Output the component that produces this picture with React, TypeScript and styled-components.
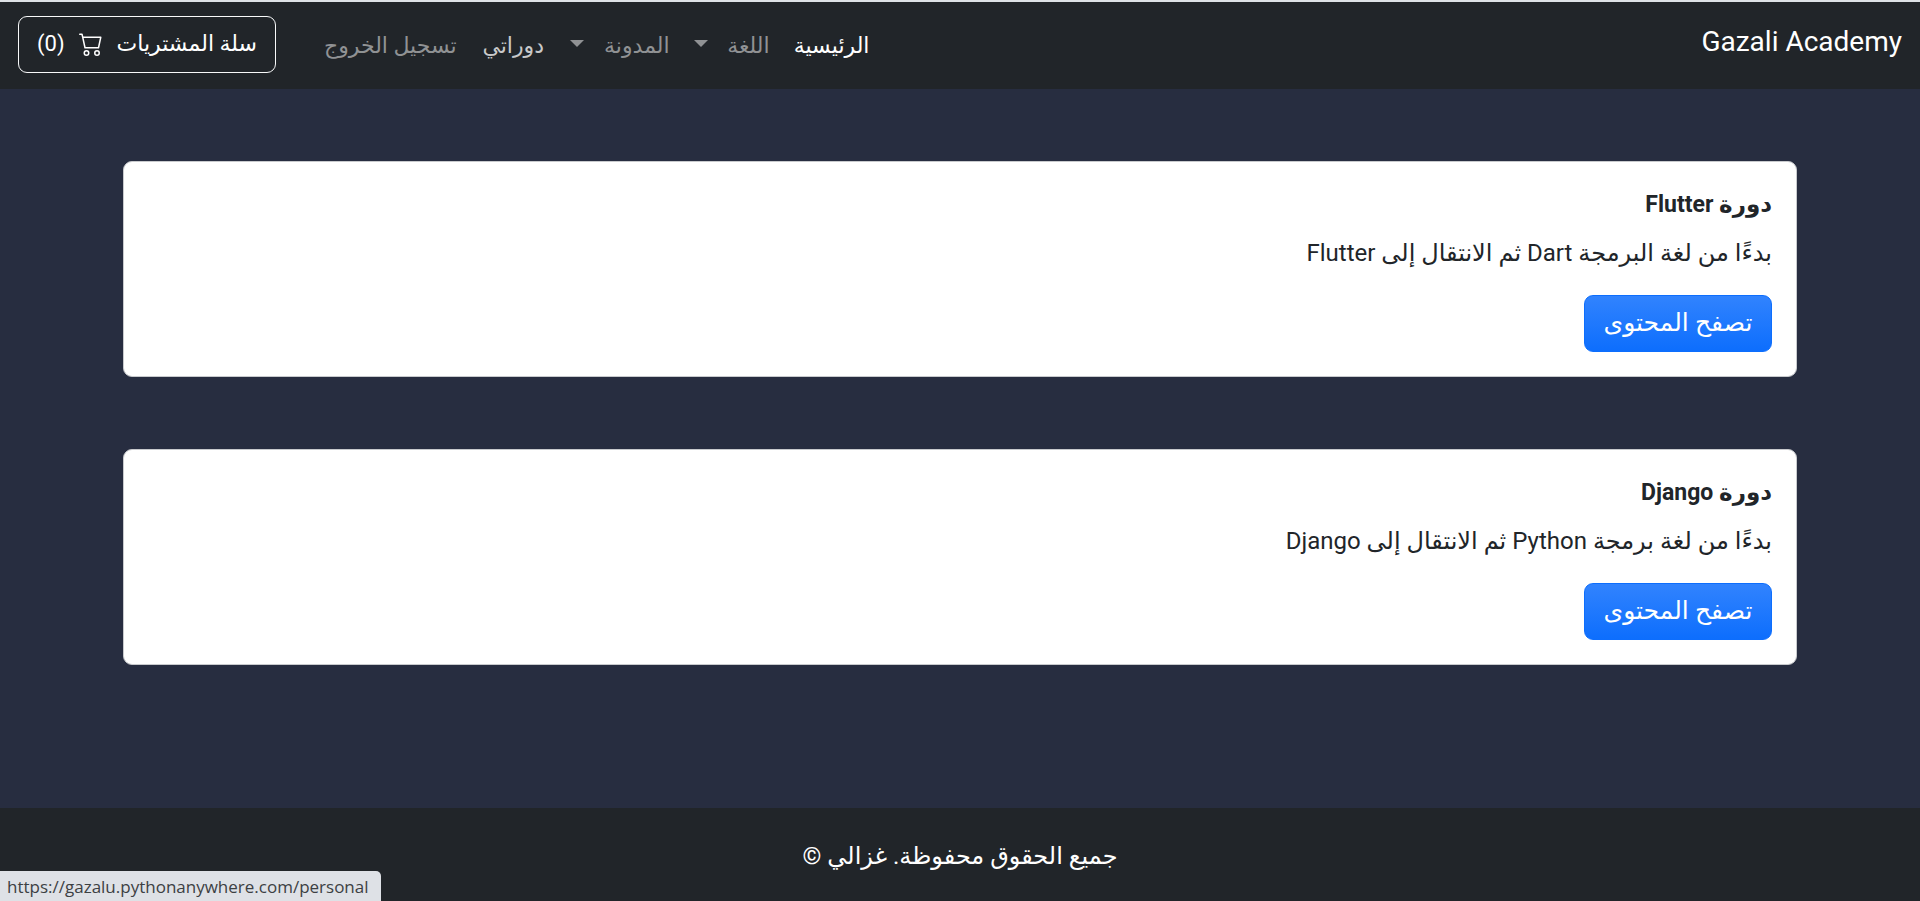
import React from "react";
import styled, { createGlobalStyle } from "styled-components";

const GlobalStyle = createGlobalStyle`
  *, *::before, *::after { box-sizing: border-box; }
  body {
    margin: 0;
    background: #272d40;
    color: #212529;
    font-family: Roboto, "DejaVu Sans", sans-serif;
    font-size: 24px;
    line-height: 36px;
  }
`;

const Page = styled.div`
  display: flex;
  flex-direction: column;
  min-height: 100vh;
`;

const Navbar = styled.header`
  display: flex;
  align-items: center;
  padding: 14px 18px 16px;
  background: #212529;
  border-top: 2px solid #dee2e6;
`;

const Brand = styled.a`
  margin-inline-end: auto;
  padding-bottom: 6px;
  color: #fff;
  font-size: 28px;
  text-decoration: none;
  white-space: nowrap;
`;

const NavList = styled.ul`
  display: flex;
  margin: 0;
  padding: 0;
  list-style: none;
`;

const NavLink = styled.a<{ $tone?: "active" | "hover"; $width: number; $menu?: boolean }>`
  display: flex;
  align-items: center;
  justify-content: ${(p) => (p.$menu ? "space-between" : "center")};
  min-width: ${(p) => p.$width}px;
  padding: 3px 12px 0;
  font-size: 22px;
  white-space: nowrap;
  color: ${(p) => (p.$tone === "active" ? "#fff" : p.$tone === "hover" ? "#c8c9ca" : "#909294")};
  text-decoration: none;
`;

const Caret = styled.span`
  margin-bottom: 6px;
  border: 7px solid transparent;
  border-top-color: currentColor;
  border-bottom: 0;
`;

const CartButton = styled.button`
  display: flex;
  align-items: center;
  justify-content: space-between;
  gap: 12px;
  min-width: 258px;
  height: 57px;
  margin-inline-start: 36px;
  padding: 0 18px 2px;
  border: 1px solid #f8f9fa;
  border-radius: 9px;
  background: transparent;
  color: #fff;
  font: inherit;
  font-size: 22px;
  white-space: nowrap;
  cursor: pointer;
`;

const Main = styled.main`
  flex: 1;
  display: flex;
  flex-direction: column;
  gap: 72px;
  padding: 72px 123px;
`;

const Card = styled.article`
  display: flex;
  flex-direction: column;
  align-items: flex-start;
  padding: 25px 24px 24px;
  border: 1px solid #c8cacd;
  border-radius: 9px;
  background: #fff;
`;

const CardTitle = styled.h2`
  margin: 0 0 12px;
  font-size: 23px;
  line-height: 36px;
  font-weight: 700;
`;

const CardText = styled.p`
  margin: 0 0 24px;
`;

const BrowseButton = styled.button`
  min-width: 188px;
  height: 57px;
  padding: 0 18px 2px;
  border: 1px solid #0d6efd;
  border-radius: 9px;
  background: linear-gradient(#3183fe, #0d6efd);
  color: #fff;
  font: inherit;
  font-size: 25px;
  white-space: nowrap;
  cursor: pointer;
`;

const Footer = styled.footer`
  padding: 30px 18px 27px;
  background: #212529;
  color: #fff;
  text-align: center;
`;

const StatusBar = styled.div`
  position: fixed;
  left: 0;
  bottom: 0;
  padding: 5px 12px 3px 7px;
  border-top-right-radius: 5px;
  background: #dee1e6;
  color: #3c4043;
  font-family: "Open Sans", sans-serif;
  font-size: 17px;
  line-height: 22px;
`;

const CartIcon = () => (
  <svg width="24" height="24" viewBox="0 0 16 16" fill="currentColor" aria-hidden="true">
    <path d="M0 1.5A.5.5 0 0 1 .5 1H2a.5.5 0 0 1 .485.379L2.89 3H14.5a.5.5 0 0 1 .49.598l-1.5 7A.5.5 0 0 1 13 11H4a.5.5 0 0 1-.49-.402L2.01 3.607 1.61 2H.5a.5.5 0 0 1-.5-.5zM3.102 4l1.313 6h8.17l1.313-6H3.102zM5 12a2 2 0 1 0 0 4 2 2 0 0 0 0-4zm7 0a2 2 0 1 0 0 4 2 2 0 0 0 0-4zm-7 1a1 1 0 1 1 0 2 1 1 0 0 1 0-2zm7 0a1 1 0 1 1 0 2 1 1 0 0 1 0-2z" />
  </svg>
);

const links: { label: string; width: number; tone?: "active" | "hover"; menu?: boolean }[] = [
  { label: "الرئيسية", width: 99, tone: "active" },
  { label: "اللغة", width: 100, menu: true },
  { label: "المدونة", width: 124, menu: true },
  { label: "دوراتي", width: 89, tone: "hover" },
  { label: "تسجيل الخروج", width: 156 },
];

const courses = [
  { title: "دورة Flutter", text: "بدءًا من لغة البرمجة Dart ثم الانتقال إلى Flutter" },
  { title: "دورة Django", text: "بدءًا من لغة برمجة Python ثم الانتقال إلى Django" },
];

export default function App() {
  return (
    <Page dir="rtl" lang="ar">
      <GlobalStyle />
      <Navbar>
        <Brand href="#">Gazali Academy</Brand>
        <nav>
          <NavList>
            {links.map((l) => (
              <li key={l.label}>
                <NavLink href="#" $tone={l.tone} $width={l.width} $menu={l.menu}>
                  {l.label}
                  {l.menu && <Caret />}
                </NavLink>
              </li>
            ))}
          </NavList>
        </nav>
        <CartButton type="button">
          <span>سلة المشتريات</span>
          <CartIcon />
          <span>(0)</span>
        </CartButton>
      </Navbar>
      <Main>
        {courses.map((c) => (
          <Card key={c.title}>
            <CardTitle>{c.title}</CardTitle>
            <CardText>{c.text}</CardText>
            <BrowseButton type="button">تصفح المحتوى</BrowseButton>
          </Card>
        ))}
      </Main>
      <Footer>جميع الحقوق محفوظة. غزالي ©</Footer>
      <StatusBar dir="ltr">https://gazalu.pythonanywhere.com/personal</StatusBar>
    </Page>
  );
}
